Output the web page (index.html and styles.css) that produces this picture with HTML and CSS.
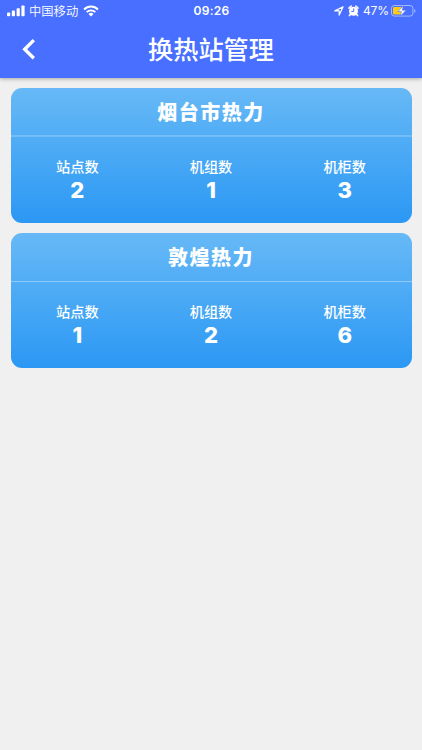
FILE: index.html
```html
<!DOCTYPE html>
<html lang="zh-CN">
<head>
<meta charset="utf-8">
<meta name="viewport" content="width=device-width, initial-scale=1">
<title>换热站管理</title>
<link rel="stylesheet" href="styles.css">
</head>

<body>
<header class="header">
  <div class="status">
    <div class="status-left">
      <svg class="signal" width="18" height="12" viewBox="0 0 18 12" fill="#fff">
        <rect x="0" y="7.4" width="3.2" height="3.9" rx=".8"/>
        <rect x="4.8" y="5.6" width="3.2" height="5.7" rx=".8"/>
        <rect x="9.6" y="3.2" width="3.2" height="8.1" rx=".8"/>
        <rect x="14.4" y="0.5" width="3.2" height="10.8" rx=".8"/>
      </svg>
      <span class="carrier">中国移动</span>
      <svg class="wifi" width="16" height="12" viewBox="0 0 16 12">
        <path d="M1.1 4.4a9.8 9.8 0 0 1 13.8 0" fill="none" stroke="#fff" stroke-width="2.1"/>
        <path d="M3.7 7.1a6.1 6.1 0 0 1 8.6 0" fill="none" stroke="#fff" stroke-width="1.9"/>
        <path d="M8 11.5L5.5 9a3.5 3.5 0 0 1 5 0z" fill="#fff"/>
      </svg>
    </div>
    <div class="clock">09:26</div>
    <div class="status-right">
      <svg width="10" height="10" viewBox="0 0 10 10">
        <path d="M.8 4.9L9.1.8 5.2 9.1V4.9z" fill="none" stroke="#fff" stroke-width="1.2" stroke-linejoin="round"/>
      </svg>
      <svg class="alarm" width="11" height="12" viewBox="0 0 11 12">
        <path d="M1 3.1L3.2 1M10 3.1L7.8 1M2.3 9.6L1.5 10.6M8.7 9.6l.8 1" stroke="#fff" stroke-width="1.6" stroke-linecap="round"/>
        <circle cx="5.5" cy="6.2" r="4.5" fill="#fff"/>
        <path d="M5.7 3.4v3H3.3" fill="none" stroke="#486fff" stroke-width="1"/>
      </svg>
      <span class="percent">47%</span>
      <svg class="battery" width="25" height="12" viewBox="0 0 25 12">
        <rect x=".5" y=".5" width="21.4" height="10.6" rx="2.8" fill="none" stroke="#fff" stroke-opacity=".5"/>
        <path d="M23.2 4v3.8q1.3-.5 1.3-1.9T23.2 4z" fill="#fff" fill-opacity=".5"/>
        <rect x="2" y="2" width="9" height="7.6" rx="1.3" fill="#fecb16"/>
        <path d="M12.4.8L6.8 6.6h3.7l-1.1 4.6 5.7-6h-3.8z" fill="#fff" stroke="#486fff" stroke-width=".6"/>
      </svg>
    </div>
  </div>
  <div class="navbar">
    <a class="back">
      <svg width="14" height="22" viewBox="0 0 14 22">
        <path d="M11.8 2.1L2.7 11.2l9.1 9.1" fill="none" stroke="#fff" stroke-width="3.4"/>
      </svg>
    </a>
    <h1 class="title">换热站管理</h1>
  </div>
</header>

<main class="list">
  <section class="card">
    <h2 class="card-title">烟台市热力</h2>
    <div class="stats">
      <div class="stat"><span class="label">站点数</span><b class="num">2</b></div>
      <div class="stat"><span class="label">机组数</span><b class="num">1</b></div>
      <div class="stat"><span class="label">机柜数</span><b class="num">3</b></div>
    </div>
  </section>
  <section class="card">
    <h2 class="card-title thin">敦煌热力</h2>
    <div class="stats">
      <div class="stat"><span class="label">站点数</span><b class="num">1</b></div>
      <div class="stat"><span class="label">机组数</span><b class="num">2</b></div>
      <div class="stat"><span class="label">机柜数</span><b class="num">6</b></div>
    </div>
  </section>
</main>
</body>
</html>
```

FILE: styles.css
```css
* {
  box-sizing: border-box;
}
body {
  margin: 0;
  min-height: 100vh;
  background: #f0f0f0;
  color: #fff;
  font-family: Inter, "Noto Sans CJK SC", sans-serif;
}
svg {
  display: block;
}

/* top bar */
.header {
  height: 78px;
  background: #486fff;
  box-shadow: 0 1px 4px rgba(0,0,0,.3);
}
.status {
  display: grid;
  grid-template-columns: 1fr auto 1fr;
  align-items: center;
  height: 22px;
  padding: 0 6px 0 7px;
  font-size: 12px;
  line-height: 22px;
}
.status-left, .status-right {
  display: flex;
  align-items: center;
}
.status-right {
  justify-content: flex-end;
}
.signal {
  margin-right: 4px;
}
.carrier {
  padding-top: 2px;
  font-size: 12.3px;
  line-height: 20px;
  font-weight: 350;
}
.wifi {
  margin-left: 5px;
}
.clock {
  font-weight: 600;
  letter-spacing: .3px;
}
.alarm {
  margin-left: 4px;
}
.percent {
  margin: 0 2px 0 4px;
  letter-spacing: -.1px;
}
.navbar {
  display: grid;
  grid-template-columns: 50px 1fr 50px;
  align-items: center;
  height: 54px;
}
.back {
  padding-left: 22px;
}
.title {
  margin: 0;
  padding-top: 2px;
  text-align: center;
  font-size: 25.2px;
  line-height: 52px;
  font-weight: 500;
}

/* station cards */
.list {
  display: flex;
  flex-direction: column;
  gap: 10.5px;
  padding: 10px 10.5px;
}
.card {
  height: 134.8px;
  border-radius: 11px;
  background: linear-gradient(#67b9f6, #2b98f4);
  overflow: hidden;
}
.card-title {
  margin: 0;
  height: 49px;
  padding-top: 1.5px;
  border-bottom: 2px solid rgba(255,255,255,.2);
  text-align: center;
  font-size: 20px;
  line-height: 47px;
  font-weight: 900;
  letter-spacing: 1.5px;
}
.thin {
  border-bottom: 1px solid rgba(255,255,255,.36);
}
.stats {
  display: grid;
  grid-template-columns: repeat(3, 1fr);
  padding-top: 19px;
}
.stat {
  display: flex;
  flex-direction: column;
  align-items: center;
}
.label {
  font-size: 14.2px;
  line-height: 22px;
  font-weight: 500;
}
.num {
  font-size: 22px;
  line-height: 24.4px;
  font-weight: 800;
}
```
